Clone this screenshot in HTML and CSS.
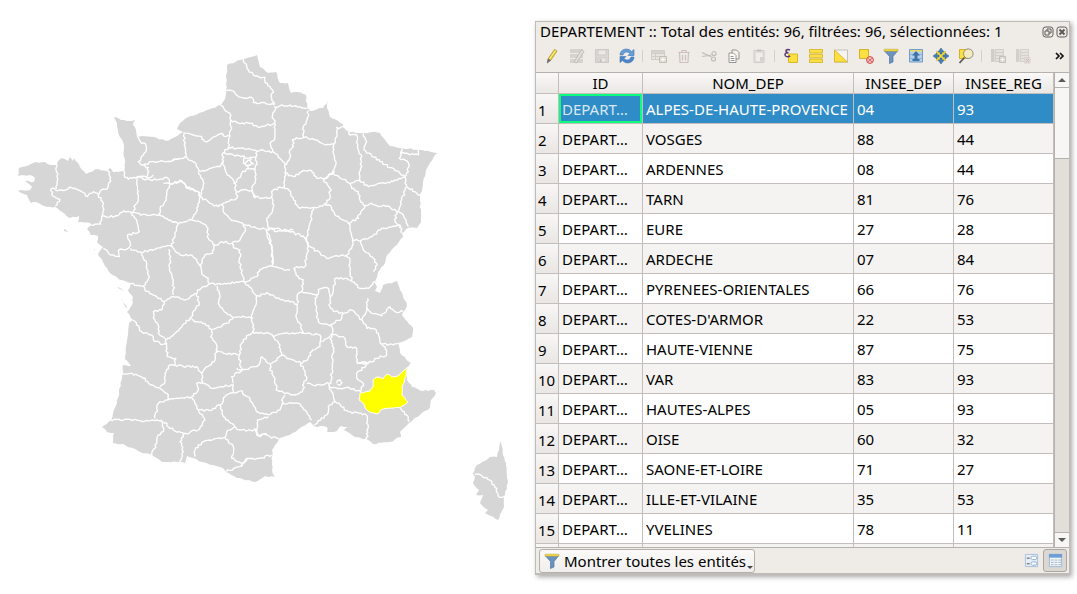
FILE: index.html
```html
<!DOCTYPE html>
<html lang="fr">
<head>
<meta charset="utf-8">
<title>DEPARTEMENT</title>
<link rel="stylesheet" href="styles.css">
</head>
<body>
<main class="workspace">
<svg class="map" viewBox="0 0 535 594" role="img" aria-label="Carte des départements">
  <path class="land" d="M257 55 243 59 227 65 226 90 225 99 221 105 203 112 188 117 180 123 177 129 183 132 168 141 157 138 142 136 137 137 136 130 133 125 135 120 127 121 121 120 114 117 117 123 118 132 123 142 125 168 124 171 113 172 110 168 107 171 98 169 86 174 80 167 74 158 73 161 70 157 68 161 62 158 59 160 57 165 50 165 45 162 33 163 27 166 19 168 18 176 30 175 35 178 34 182 25 181 32 187 30 190 18 191 27 195 31 203 36 202 47 207 55 207 62 212 70 218 79 216 78 222 90 223 92 225 87 229 91 235 98 236 97 242 103 247 98 254 107 268 110 273 120 280 131 283 128 290 133 297 132 305 127 312 133 320 129 323 125 359 131 366 123 365 122 377 117 403 111 420 102 427 107 432 114 433 113 443 123 444 140 452 152 455 162 462 177 462 185 463 187 456 202 462 213 465 223 468 226 472 237 478 240 478 255 482 265 476 275 477 272 470 272 450 280 438 290 435 300 428 310 422 314 426 327 427 327 432 337 431 341 426 348 427 344 430 355 437 366 439 373 444 390 442 401 437 400 432 409 423 420 415 430 408 431 400 436 393 434 390 423 391 412 387 407 380 406 375 408 367 411 363 400 353 398 343 412 337 413 328 402 315 407 305 400 290 397 281 383 285 380 293 375 291 377 287 375 283 378 272 385 263 387 255 403 237 402 233 408 228 417 228 421 222 420 197 426 170 437 153 419 150 402 148 390 146 380 133 372 132 363 133 350 132 343 127 343 124 330 117 327 108 328 101 323 108 310 111 307 107 306 95 298 92 291 93 288 83 280 83 276 72 268 73 260 67Z"/>
  <path class="land" d="M64 229 68 232 64 231ZM94 248 95 251 94 250ZM121 298 127 307 126 308ZM117 287 124 291 118 288Z"/>
  <path class="land" d="M500 441 502 447 503 455 506 463 508 483 504 497 504 507 498 520 485 513 488 510 480 503 483 495 476 495 479 490 473 483 475 477 473 474 477 465 490 457 497 457 499 450Z"/>

  <g class="borders" transform="translate(0 90) scale(.33333)">
    <path d="M170 222 168 240 173 265 170 297M152 297 185 300 215 293 255 310 262 320 280 305 295 315M152 297 158 318 180 328 165 348M322 242 332 262 325 290 300 305 295 315M295 315 308 335 312 358 305 380 302 402 275 405M305 380 345 378 372 362 395 370M395 370 410 340 415 305 412 265M370 240 375 262 385 268 412 260 440 268M412 140 425 160 437 162 438 185 415 215 430 225 445 232 440 262M430 225 455 215 500 215 540 205M440 268 470 270 500 262 508 275 512 285M508 285 500 310 495 335 480 355 478 375M395 368 440 375 478 375M395 370 412 400 418 425 382 435 392 465M310 475 335 495 358 500 358 478 372 480 392 465"/>
  </g>
  <g class="borders" transform="translate(90 160) scale(.33333)">
    <path d="M140 52 182 52 190 45M240 72 275 62 290 82 325 95 330 110M330 110 322 150 305 180M205 160 235 180 265 192 305 180M330 110 335 90 342 70 325 35M400 15 410 40 430 60 440 95M330 110 360 130 385 140 400 130 440 115 440 95M440 95 460 90 485 92 495 115M397 130 400 155 425 182 460 192M460 192 500 205 530 208M545 112 552 135 545 160 530 175 535 205M460 192 465 215 450 240 425 250M425 250 395 245 375 255M305 180 330 185 350 200 355 235 375 255M375 255 368 280 345 285 332 320M245 258 270 285 300 285 315 295 332 320M265 192 255 225 245 258M120 265 155 278 200 265 245 258M235 268 242 290 238 330 250 360 250 405M332 320 335 340 355 355 358 372M122 372 160 378M155 278 170 310 178 350 160 378M160 378 165 392 200 410 222 425M222 425 250 410 290 418 320 400 322 390 358 372M358 372 410 372 450 365 465 368M425 250 435 265 450 270 450 320 462 355 465 368M465 368 500 350 510 328 545 318M530 208 538 250 548 275 545 318M545 318 570 325 600 330M530 208 560 205 575 212 610 210M380 378 388 400 385 430 400 450M465 368 485 385 498 405"/>
  </g>
  <g class="borders" transform="translate(170 40) scale(.33333)">
    <path d="M220 57 235 90 255 108 285 112 285 128 300 140 308 150 305 175 312 195M168 150 185 152 215 172 245 172 250 188 285 188 312 195M152 196 180 220 182 240M182 240 200 247 240 250 270 262 312 250M312 200 360 195 412 205M318 200 308 225 314 250 315 290 300 310 308 335M175 322 210 325 250 330 308 335M182 240 182 270 180 290 175 322M40 278 70 285 95 290 105 305 135 290 150 282 180 290M42 282 45 320 52 355M10 362 52 352M52 355 75 368 90 395M90 395 120 385 150 380 158 365M-20 430 20 430 35 422 50 445 85 455 90 470M175 322 158 340 158 375M158 338 190 345 225 350M260 335 258 350 225 355M225 350 220 370 235 385 255 390 260 365 258 350M225 370 240 360 250 372 235 375 225 375M240 360 245 355M190 430 200 425 215 400 235 385M255 390 255 410 255 430 245 445M245 445 250 470 300 475M308 335 330 355 345 375 348 405 342 440 310 450 300 475M415 212 412 235 400 260 402 292 368 298 370 320 360 330 362 350 345 375M402 292 440 300 460 312 492 312M530 262 500 262 500 290 492 312 490 340 498 365 490 400M345 400 375 410 395 395 425 392 440 415 470 415 475 405 490 400M342 440 362 455 370 480"/>
  </g>
  <g class="borders" transform="translate(300 120) scale(.33333)">
    <path d="M148 35 150 45 170 45 175 90 185 110 178 185M130 22 145 28 148 40M100 160 150 190 180 182M190 40 200 65 192 90 240 125 300 160 315 170M180 182 205 200 240 190 280 185 315 170M305 85 302 100 355 105 355 90M302 95 298 115 325 128 325 155 315 170M315 170 315 190 320 200 345 215 360 225M320 200 305 240 295 275M150 190 155 205 175 215 180 240 195 258M195 258 215 250 235 260 262 258 295 275M290 275 285 305 303 320M295 275 310 285 325 320M182 362 215 350 245 325 300 315 305 340M75 250 95 262 105 285 145 310M195 258 175 285 175 295 145 310M105 155 70 180 90 205 90 235 75 250M75 250 55 262 0 265M40 262 30 310 20 350 20 365 30 380M30 380 80 415 140 405M140 405 155 385 158 355 150 320 145 310M158 360 182 362 190 390 220 415 232 435 220 455M140 405 150 425 150 455 155 485M155 485 180 505 205 505 225 485M155 485 135 475 105 475 100 510 92 530"/>
  </g>
  <g class="borders" transform="translate(240 200) scale(.33333)">
    <path d="M85 80 110 95 140 90 200 115M80 90 95 135 98 192M200 115 205 140M160 0 180 25M205 140 200 165 195 200 160 205M160 205 168 225 190 240 185 275M185 275 205 280 235 282 235 268 265 265 270 280M185 275 175 280 172 310M48 290 80 278 110 295 172 312M172 312 168 350 180 370 192 400M48 285 48 315 35 345 42 400M42 400 80 398 100 410M100 410 135 400 192 400M235 282 225 295 232 345 235 365 265 375M270 280 270 320 285 335 310 340 305 355 270 375M265 375 278 385 272 405M310 340 335 330 365 360M365 360 380 325 382 295M382 325 395 340 425 348 450 320 465 335 490 335M365 360 380 385 400 385 415 400 420 425 435 440M435 440 440 465 410 475 385 490 350 490M425 432 460 435 475 430M272 405 310 410 320 440 350 445 350 485 385 490M192 400 240 405 240 430M240 425 240 440 215 455 205 475 182 490M245 425 270 408M272 405 280 450 278 490M100 410 120 435 125 465 160 480 182 490M125 465 95 490M90 490 78 485 65 470 50 500 0 510 -10 505"/>
  </g>
  <g class="borders" transform="translate(240 340) scale(.33333)">
    <path d="M95 70 90 85 105 115 108 150 130 158M130 158 165 165 188 155 192 130M182 70 200 110 192 130M200 130 225 138 268 130M278 70 278 80 268 140M268 140 280 165 285 185M285 185 325 215 380 225M285 185 265 200 260 225 222 255M268 140 300 145 330 145 362 155M385 70 350 100 355 120 370 130 362 155M0 152 30 175 50 215 85 225M85 225 120 210 130 190 125 180 135 165M125 190 175 190 200 215 215 240M85 230 52 240 50 285 70 282 90 290 118 297M0 270 50 270M0 380 20 355 60 355 95 345M380 225 385 260 380 300M480 205 500 225 508 245M705 403 740 412 770 445 778 472 792 470M290 130 292 122 300 120 306 128 300 135 292 134"/>
  </g>
  <g class="borders" transform="translate(90 240) scale(.33333)">
    <path d="M222 185 215 210 190 215 190 235 205 255 205 280 228 300 230 315M130 240 155 275 185 285 195 305 230 315M230 300 260 275 300 235 328 190 320 160M300 235 320 245 345 250 365 268M365 268 395 260 430 235M400 210 430 232M430 232 460 228 490 235M365 268 362 290 380 315 378 330M378 330 400 340 448 345M448 345 455 310 475 285 490 275M448 345 450 370 458 390M458 390 425 410 430 430M378 330 375 360 345 385 335 400M230 315 232 350 258 355 255 375M255 375 280 380 320 380 335 400M255 375 240 375 225 400 225 425 210 440M95 400 120 400 155 410 185 435 210 445M210 445 235 465 232 480 205 490 195 535M232 480 270 475 305 470M335 400 338 425 320 430 325 450 305 470M335 425 365 445 395 440 430 435 430 458M430 458 405 470 390 495 360 512 325 510M430 458 450 453M305 470 325 510 345 540 325 570 285 580M285 580 250 570 220 545M62 540 110 538 150 542 200 540 215 540M215 540 220 575 205 585 200 610 185 645M285 580 270 605 280 635 268 665M315 650 315 630 335 608 370 598 405 592M390 495 400 530 435 560 410 575 405 592M435 560 440 568 450 570M495 570 505 588 530 580M405 592 430 620 425 655 455 670M408 695 455 678 470 655"/>
  </g>
  <path class="selected" d="M408 367 406 377 402 387 402 395 408 402 401 407 390 408 383 409 377 414 368 411 365 408 363 403 359 400 360 393 370 391 373 387 373 380 377 377 383 379 387 374 392 377 398 376 402 372Z"/>
</svg>

<section class="panel" aria-label="Table d'attributs">
  <header class="titlebar">
    <h1 class="title">DEPARTEMENT :: Total des entités: 96, filtrées: 96, sélectionnées: 1</h1>
    <button class="winbtn" aria-label="Détacher"><svg viewBox="0 0 12 12"><rect x="1" y="1" width="10" height="10" rx="2.5"/><path d="M5 5V3h4v4H7M3 5h4v4H3z"/></svg></button>
    <button class="winbtn" aria-label="Fermer"><svg viewBox="0 0 12 12"><rect x="1" y="1" width="10" height="10" rx="2.5"/><path class="cross" d="M3.5 3.5l5 5M8.5 3.5l-5 5"/></svg></button>
  </header>

  <div class="toolbar" role="toolbar" aria-label="Outils">
    <button class="tool" aria-label="Mode édition"><svg viewBox="0 0 16 16"><path d="M4 11 10.500 1.500 13 3 6.500 12.500Z" fill="#edd43a" stroke="#a88f1c" stroke-width=".8"/><path d="M4 11 6.500 12.500 3.200 15Z" fill="#777" stroke="#666" stroke-width=".7"/><path d="M5.500 11 11.500 2.500" stroke="#fff29a"/></svg></button>
    <button class="tool off" aria-label="Édition multiple"><svg viewBox="0 0 16 16"><path d="M1 1h13v4H1zM1 6h13v4H1zM1 11h13v4H1z" fill="#d0cec9"/><path d="M5 14 12.500 1.500l2.500 2L7.500 15Z" fill="#dddbd7" stroke="#aaa8a4" stroke-width=".8"/></svg></button>
    <button class="tool off" aria-label="Enregistrer"><svg viewBox="0 0 16 16"><path d="M1.500 1.500h13v13h-13z" fill="#d6d4d0" stroke="#c5c3bf"/><path d="M4 2h8v5H4zM4 10h8v4H4z" fill="#eceae7" stroke="#c8c6c2"/><path d="M5.500 11h2v3h-2z" fill="#b5b3af"/></svg></button>
    <button class="tool" aria-label="Recharger"><svg viewBox="0 0 16 16"><path d="M1 7C1 1 9-1 12.500 3.500L15 1.500V7.500H9L11 5.500C8.500 3 5 3.500 4 7Z" fill="#6a9ed6" stroke="#3976b8" stroke-width=".6"/><path d="M15 9C15 15 7 17 3.500 12.500L1 14.500V8.500H7L5 10.500C7.500 13 11 12.500 12 9Z" fill="#4a86c8" stroke="#3976b8" stroke-width=".6"/></svg></button>
    <span class="sep"></span>
    <button class="tool off" aria-label="Ajouter une entité"><svg viewBox="0 0 16 16"><path d="M.5 2.500h13v9H.5zM.5 5.500h13M.5 8.500h13M4.500 5.500v6" fill="#e6e4e0" stroke="#c8c6c1"/><path d="M1 3h12v2H1z" fill="#d0cec9"/><path d="M8.500 8.500h7v6h-7z" fill="#dddbd2" stroke="#b8b5ac"/><path d="M12 9.500v4M10 11.500h4" stroke="#fff"/></svg></button>
    <button class="tool off" aria-label="Supprimer"><svg viewBox="0 0 16 16"><path d="M2 4.500h12M6 4V2.500h4V4M3.500 5l.5 9.500h8l.5-9.500M6.500 7v5.500M9.500 7v5.500" fill="none" stroke="#c9b6b3" stroke-width="1.200"/></svg></button>
    <button class="tool off" aria-label="Couper"><svg viewBox="0 0 16 16" fill="none" stroke="#b5b3ae" stroke-width="1.200"><path d="M1 4.500 10.500 9M1 8.500 10.500 7"/><circle cx="13" cy="5.500" r="2"/><circle cx="12.500" cy="11" r="2"/></svg></button>
    <button class="tool" aria-label="Copier"><svg viewBox="0 0 16 16" stroke="#8c8a85" stroke-width=".9"><path d="M6 2h4.500L13 4.500V11H6z" fill="#f3f2ef"/><path d="M3 5h4.500L10 7.500V14.500H3z" fill="#fff"/><path d="M4.500 8.500h3M4.500 10.500h4M4.500 12.500h4"/></svg></button>
    <button class="tool off" aria-label="Coller"><svg viewBox="0 0 16 16"><path d="M3 2.500h10v12H3z" fill="#dddbd7" stroke="#cac8c4"/><path d="M5 5h6.500v8H5z" fill="#f1efed"/><path d="M6 1.500h4v2H6z" fill="#bbb9b5"/><path d="M9 9h3.500v4H9z" fill="#ccc"/></svg></button>
    <span class="sep"></span>
    <button class="tool" aria-label="Sélection par expression"><svg viewBox="0 0 16 16"><path d="M5.500 6h9v8.500h-9z" fill="#fbe03f" stroke="#d9b92a"/><path d="M7 2C4.500 1 2.500 2 3 3.500 3.300 4.600 4.500 4.700 5.500 4.700 3.500 4.700 1.800 5.300 2 7 2.200 9 5 9 7.200 8" fill="none" stroke="#59386e" stroke-width="1.500"/></svg></button>
    <button class="tool" aria-label="Tout sélectionner"><svg viewBox="0 0 16 16" fill="#fbe03f" stroke="#d4b12a" stroke-width=".8"><path d="M1.500 1.500h13v3.500h-13zM1.500 6.300h13v3.500h-13zM1.500 11h13v3.500h-13z"/></svg></button>
    <button class="tool" aria-label="Inverser la sélection"><svg viewBox="0 0 16 16"><path d="M1.500 2h13v12h-13z" fill="#f5f4f1" stroke="#b8b5ae" stroke-width=".8"/><path d="M1.500 2v12h13z" fill="#fbe03f" stroke="#d4b12a" stroke-width=".8"/></svg></button>
    <button class="tool" aria-label="Désélectionner"><svg viewBox="0 0 16 16"><path d="M1.500 1.500h9v9h-9z" fill="#fbe03f" stroke="#d4b12a"/><circle cx="12" cy="12" r="3.400" fill="#f6cfcc" stroke="#d2433e"/><path d="M9.500 14 14.500 10M10 10.500l4 3.500" stroke="#d2433e" stroke-width=".8"/></svg></button>
    <button class="tool" aria-label="Filtrer"><svg viewBox="0 0 16 16"><path d="M1.500 3h13L10 8.500v5.500L6.500 15.500v-7Z" fill="#6b93c0" stroke="#4f769f" stroke-width=".7"/><path d="M1 1.200h14v2H1z" fill="#f5dc3c" stroke="#b8a04b" stroke-width=".5"/></svg></button>
    <button class="tool" aria-label="Déplacer la sélection en haut"><svg viewBox="0 0 16 16"><path d="M1.500 1.500h13v12.500h-13z" fill="#b9d0e8" stroke="#6f9cc9"/><path d="M2 2h12v1.500H2z" fill="#f0dc5c"/><path d="M2 6.500h12M2 10.500h12" stroke="#8db2d8"/><path d="M8 3 12 7.500H9.500V11h2v2h-7v-2h2V7.500H4Z" fill="#3e73a8"/></svg></button>
    <button class="tool" aria-label="Centrer sur la sélection"><svg viewBox="0 0 16 16"><path d="M3.500 3.500h9v9h-9z" fill="#f5d936" stroke="#d8bd3a" stroke-width=".7"/><path d="M8 0 11 4H9v2H7V4H5ZM8 16 5 12h2v-2h2v2h2ZM0 8l4-3v2h2v2H4v2ZM16 8l-4 3V9h-2V7h2V5Z" fill="#4c7db3" stroke="#33639a" stroke-width=".5"/></svg></button>
    <button class="tool" aria-label="Zoomer sur la sélection"><svg viewBox="0 0 16 16"><path d="M1.500 1.500h9v9h-9z" fill="#fbe03f" stroke="#d4b12a"/><circle cx="10.300" cy="5.700" r="4.800" fill="#f4ebbc" stroke="#8f8d88"/><path d="M6.500 9.500 1.500 15" stroke="#5b5954" stroke-width="1.800"/></svg></button>
    <span class="sep"></span>
    <button class="tool off" aria-label="Nouveau champ"><svg viewBox="0 0 16 16"><path d="M1 1h3.500v13H1z" fill="#c8c6c1"/><path d="M5.500 1.500h8v12h-8zM5.500 4.500h8M5.500 7.500h8M5.500 10.500h8" fill="#e3e1dd" stroke="#cac8c3"/><path d="M9.500 8.500h6v6h-6z" fill="#d6d4ce" stroke="#b8b6b1"/><path d="M12.500 9.500v4M10.500 11.500h4" stroke="#fff"/></svg></button>
    <button class="tool off" aria-label="Supprimer le champ"><svg viewBox="0 0 16 16"><path d="M1 1h3.500v13H1z" fill="#cccac5"/><path d="M5.500 1.500h8v12h-8zM5.500 4.500h8M5.500 7.500h8M5.500 10.500h8" fill="#e3e1dd" stroke="#cecbc7"/><path d="M9.500 9.500h5.500v5.500H9.500z" fill="#ddd8d5" stroke="#d8cdca"/><path d="m11 11 3 3M14 11l-3 3" stroke="#c4b4b1"/></svg></button>
    <button class="more" aria-label="Plus d'outils"><svg viewBox="0 0 10 8"><path d="M1 1l3 3-3 3M5 1l3 3-3 3" fill="none" stroke="#111" stroke-width="1.700"/></svg></button>
  </div>

  <div class="grid">
    <div class="viewport">
      <table class="attributes">
        <colgroup><col class="c-num"><col class="c-id"><col class="c-name"><col class="c-code"><col class="c-code"></colgroup>
        <thead><tr><th></th><th>ID</th><th>NOM_DEP</th><th>INSEE_DEP</th><th>INSEE_REG</th></tr></thead>
        <tbody>
          <tr class="current"><th>1</th><td>DEPART…</td><td>ALPES-DE-HAUTE-PROVENCE</td><td>04</td><td>93</td></tr>
          <tr><th>2</th><td>DEPART…</td><td>VOSGES</td><td>88</td><td>44</td></tr>
          <tr><th>3</th><td>DEPART…</td><td>ARDENNES</td><td>08</td><td>44</td></tr>
          <tr><th>4</th><td>DEPART…</td><td>TARN</td><td>81</td><td>76</td></tr>
          <tr><th>5</th><td>DEPART…</td><td>EURE</td><td>27</td><td>28</td></tr>
          <tr><th>6</th><td>DEPART…</td><td>ARDECHE</td><td>07</td><td>84</td></tr>
          <tr><th>7</th><td>DEPART…</td><td>PYRENEES-ORIENTALES</td><td>66</td><td>76</td></tr>
          <tr><th>8</th><td>DEPART…</td><td>COTES-D'ARMOR</td><td>22</td><td>53</td></tr>
          <tr><th>9</th><td>DEPART…</td><td>HAUTE-VIENNE</td><td>87</td><td>75</td></tr>
          <tr><th>10</th><td>DEPART…</td><td>VAR</td><td>83</td><td>93</td></tr>
          <tr><th>11</th><td>DEPART…</td><td>HAUTES-ALPES</td><td>05</td><td>93</td></tr>
          <tr><th>12</th><td>DEPART…</td><td>OISE</td><td>60</td><td>32</td></tr>
          <tr><th>13</th><td>DEPART…</td><td>SAONE-ET-LOIRE</td><td>71</td><td>27</td></tr>
          <tr><th>14</th><td>DEPART…</td><td>ILLE-ET-VILAINE</td><td>35</td><td>53</td></tr>
          <tr><th>15</th><td>DEPART…</td><td>YVELINES</td><td>78</td><td>11</td></tr>
          <tr><th></th><td></td><td></td><td></td><td></td></tr>
        </tbody>
      </table>
    </div>
    <div class="scrollbar">
      <button class="arrow" aria-label="Défiler vers le haut"><svg viewBox="0 0 8 4"><path d="M0 4 4 0 8 4Z"/></svg></button>
      <div class="track"><div class="thumb"></div></div>
      <button class="arrow" aria-label="Défiler vers le bas"><svg viewBox="0 0 8 4"><path d="M0 0h8L4 4Z"/></svg></button>
    </div>
  </div>

  <footer class="statusbar">
    <button class="filter">
      <svg class="funnel" viewBox="0 0 16 16"><path d="M1.500 3h13L10 8.500v5.500L6.500 15.500v-7Z" fill="#6b93c0" stroke="#4f769f" stroke-width=".7"/><path d="M1 1.200h14v2H1z" fill="#f5dc3c" stroke="#b8a04b" stroke-width=".5"/></svg>
      <span>Montrer toutes les entités</span>
      <svg class="caret" viewBox="0 0 6 3"><path d="M0 0h6L3 3Z"/></svg>
    </button>
    <div class="views">
      <button class="view" aria-label="Vue formulaire"><svg viewBox="0 0 16 16"><path d="M1.500 1.500h13v13h-13z" fill="#e6eff8" stroke="#a5bfdc"/><rect x="7.500" y="3.500" width="6" height="3.500" rx="1.500" fill="#fff" stroke="#8faed0"/><rect x="7.500" y="9.500" width="6" height="3.500" rx="1.500" fill="#fff" stroke="#8faed0"/><path d="M3 5.500h3M3 11.500h3" stroke="#444"/></svg></button>
      <button class="view on" aria-label="Vue table"><svg viewBox="0 0 16 16"><path d="M1.500 1.500h13v13h-13z" fill="#f2f6fa" stroke="#9dbbdc"/><path d="M1 1h14v4H1z" fill="#6d9fd6"/><path d="M3 7.500h3M7 7.500h3M11 7.500h3M3 10h3M7 10h3M11 10h3M3 12.500h3M7 12.500h3M11 12.500h3" stroke="#9fb3c6"/></svg></button>
    </div>
  </footer>
</section>
</main>
<script src="map.js"></script>
</body>
</html>
```
FILE: styles.css
```css
* { box-sizing: border-box; }

body {
  margin: 0;
  background: #fff;
  color: #000;
  font-family: "Noto Sans", "Open Sans", sans-serif;
  font-size: 15px;
}

button {
  margin: 0;
  padding: 0;
  border: 0;
  background: none;
  color: inherit;
  font: inherit;
}

svg { display: block; }

.workspace {
  display: grid;
  grid-template-rows: minmax(0, 1fr);
  grid-template-columns: 1fr 1fr;
  height: 100vh;
  padding-right: 7px;
}

.map { width: 100%; height: 100%; }
.land { fill: #d6d6d6; }
.borders { fill: none; stroke: #fff; stroke-width: 4px; stroke-linejoin: round; }
.selected { fill: #ff0; stroke: #fff; stroke-width: 1px; }

.panel {
  display: flex;
  flex-direction: column;
  min-width: 0;
  margin: 21px 0 19px;
  border: 1px solid #bfbcb8;
  border-bottom: 2px solid #bfbcb8;
  background: #efebe7;
  box-shadow: 2px 2px 5px rgba(0, 0, 0, .35);
}

.titlebar {
  display: flex;
  align-items: center;
  gap: 2px;
  height: 19px;
  padding: 0 1px 0 4px;
}

.title {
  flex: 1;
  margin: 0;
  font-size: 15px;
  font-weight: 400;
  line-height: 19px;
  white-space: nowrap;
}

.winbtn svg { width: 12px; height: 12px; fill: none; stroke: #5d5b58; }
.winbtn .cross { stroke-width: 2px; }

.toolbar {
  display: flex;
  align-items: center;
  height: 31px;
  padding: 0 4px 1px 3px;
}

.tool { display: flex; justify-content: center; width: 25px; }
.tool svg { width: 16px; height: 16px; }
.off { opacity: .8; }
.sep { width: 1px; height: 12px; margin: 0 3px; background: #d3cfca; }
.more { margin-left: auto; }
.more svg { width: 10px; height: 8px; }

.grid {
  display: flex;
  flex: 1;
  min-height: 0;
  border-top: 1px solid #b5b1ad;
  border-bottom: 1px solid #b5b1ad;
}

.viewport { flex: 1; min-width: 0; overflow: hidden; background: #fff; }

.attributes {
  width: 100%;
  table-layout: fixed;
  border-collapse: separate;
  border-spacing: 0;
}

.c-num { width: 23px; }
.c-id { width: 84px; }
.c-name { width: 211px; }

.attributes th, .attributes td {
  overflow: hidden;
  padding: 0 0 0 3px;
  border-right: 1px solid #c3bebb;
  border-bottom: 1px solid #c3bebb;
  font-weight: 400;
  text-align: left;
  white-space: nowrap;
}

.attributes td { height: 30px; }

.attributes thead th {
  height: 21px;
  padding: 0;
  background: linear-gradient(#faf9f8, #eae7e4);
  line-height: 20px;
  text-align: center;
}

.attributes tbody th {
  padding: 2px 0 0 2px;
  background: linear-gradient(#f8f7f6, #e9e6e3);
}

.attributes tbody tr:nth-child(even) td { background: #f5f3f2; }
.attributes .current td { background: #308cc6; color: #fff; }
.attributes .current td:nth-child(2) { box-shadow: inset 0 0 0 2px #0dfb7e; color: #d8e8f4; }

.scrollbar {
  display: flex;
  flex-direction: column;
  width: 15px;
  border-left: 1px solid #b5b1ad;
}

.arrow {
  display: flex;
  align-items: center;
  justify-content: center;
  height: 14px;
  background: #f7f6f5;
}

.arrow svg { width: 8px; height: 4px; fill: #5d5b58; }

.track {
  flex: 1;
  border-top: 1px solid #b5b1ad;
  border-bottom: 1px solid #b5b1ad;
  background: #e2dfdb;
}

.thumb { height: 16%; border-bottom: 1px solid #b5b1ad; background: #f7f6f5; }

.statusbar {
  display: flex;
  align-items: center;
  justify-content: space-between;
  height: 25px;
  padding: 0 2px 0 3px;
}

.filter {
  display: flex;
  align-items: center;
  height: 24px;
  padding: 0 1px 0 4px;
  border: 1px solid #b3afab;
  border-radius: 3px;
  background: linear-gradient(#fbfaf9, #f0eeec);
}

.funnel { width: 16px; height: 16px; margin-right: 4px; }
.caret { align-self: flex-end; width: 6px; height: 3px; margin: 0 0 3px 1px; fill: #444; }

.views { display: flex; align-items: center; }

.view {
  display: flex;
  align-items: center;
  justify-content: center;
  width: 24px;
  height: 23px;
  border: 1px solid transparent;
  border-radius: 3px;
}

.view svg { width: 15px; height: 15px; }
.view.on { border-color: #aaa6a2; background: #dbd7d3; }
```
FILE: map.js
```js
// Adds fine, repeatable irregularities to the coast and the borders.
function noise(x, y) {
  const v = Math.sin(x * 12.9898 + y * 78.233) * 43758.5453;
  return (v - Math.floor(v)) * 2 - 1;
}

function roughen(d, step, amount) {
  return d.replace(/[^MZ]+/g, (run) => {
    const n = run.trim().split(/\s+/).map(Number);
    const out = [];
    for (let i = 0; i < n.length; i += 2) {
      if (i > 0) {
        const dx = n[i] - n[i - 2];
        const dy = n[i + 1] - n[i - 1];
        const length = Math.hypot(dx, dy);
        const parts = Math.max(1, Math.round(length / step));
        for (let k = 1; k < parts; k++) {
          const x = n[i - 2] + dx * k / parts;
          const y = n[i - 1] + dy * k / parts;
          const shift = noise(x, y) * amount;
          out.push((x - dy / length * shift).toFixed(1), (y + dx / length * shift).toFixed(1));
        }
      }
      out.push(n[i], n[i + 1]);
    }
    return out.join(" ");
  });
}

document.querySelectorAll(".borders path").forEach((p) => {
  p.setAttribute("d", roughen(p.getAttribute("d"), 6, 3.5));
});
document.querySelectorAll(".land, .selected").forEach((p) => {
  p.setAttribute("d", roughen(p.getAttribute("d"), 3, 0.7));
});
```
